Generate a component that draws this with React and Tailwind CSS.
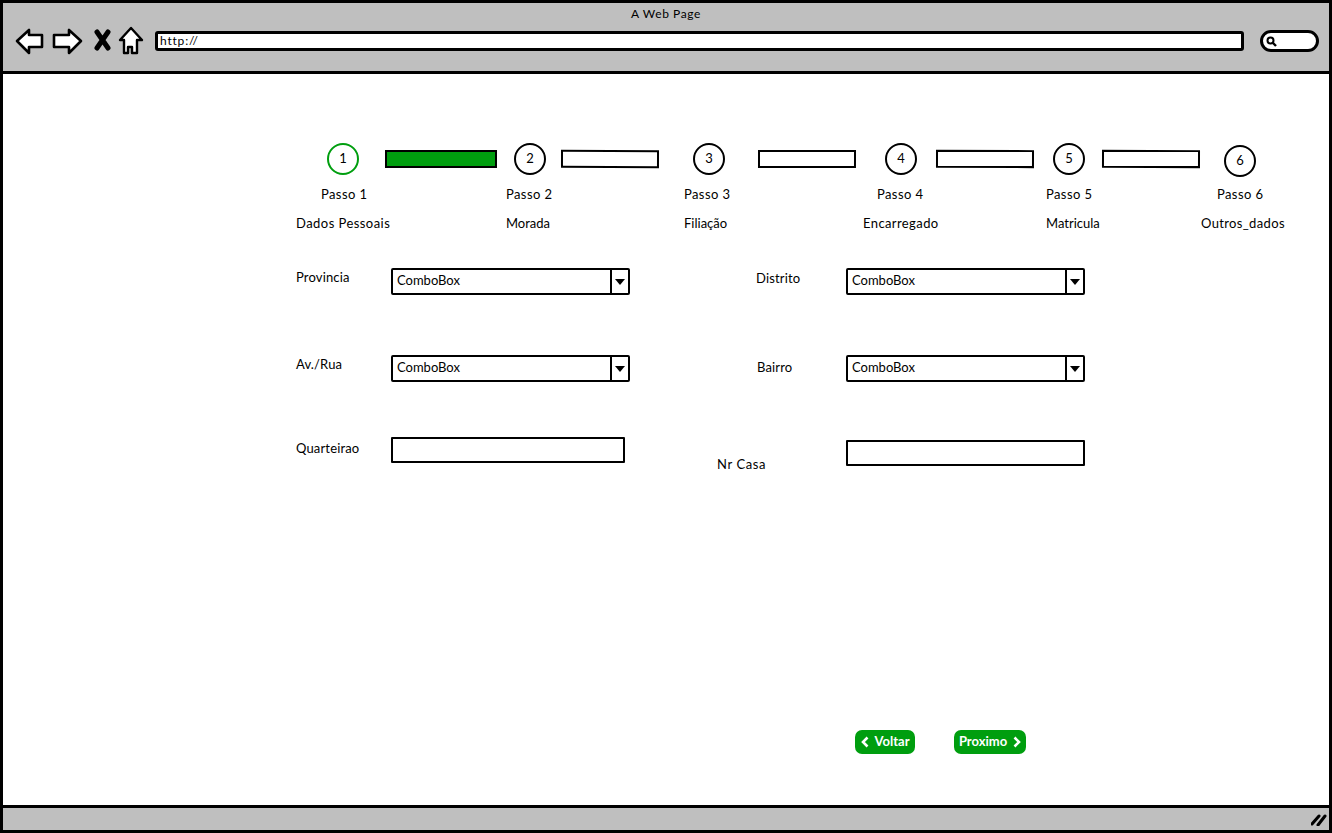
import React from "react";

const font = { fontFamily: '"Lato", "Open Sans", sans-serif' };

const steps = [
  { n: 1, bar: "ml-[31px] border-[#009e0f]", after: "ml-[26px] w-[112px] bg-[#009e0f] rotate-[0.1deg]" },
  { n: 2, bar: "ml-[17px] border-black", after: "ml-[15px] w-[98px] bg-white rotate-[0.2deg]" },
  { n: 3, bar: "ml-[34px] border-black", after: "ml-[33px] w-[98px] bg-white rotate-[0.1deg]" },
  { n: 4, bar: "ml-[29px] border-black", after: "ml-[19px] w-[98px] bg-white rotate-[0.15deg]" },
  { n: 5, bar: "ml-[19px] border-black", after: "ml-[17px] w-[98px] bg-white rotate-[0.15deg]" },
  { n: 6, bar: "ml-[24px] mt-[2px] border-black", after: "" },
];

const passos = [
  { text: "Passo 1", cls: "w-[210px] pl-[25px]" },
  { text: "Passo 2", cls: "w-[178px]" },
  { text: "Passo 3", cls: "w-[179px]" },
  { text: "Passo 4", cls: "w-[183px] pl-[14px]" },
  { text: "Passo 5", cls: "w-[155px]" },
  { text: "Passo 6", cls: "w-[90px] pl-[16px]" },
];

const nomes = [
  { text: "Dados Pessoais", cls: "w-[210px] tracking-[0.45px]" },
  { text: "Morada", cls: "w-[178px]" },
  { text: "Filiação", cls: "w-[179px]" },
  { text: "Encarregado", cls: "w-[183px] tracking-[0.4px]" },
  { text: "Matricula", cls: "w-[155px]" },
  { text: "Outros_dados", cls: "w-[90px] tracking-[0.35px]" },
];

const ComboBox = () => (
  <div className="flex h-[27px] w-[239px] items-center rounded-[2px] border-2 border-black bg-white pl-[4px]">
    <span className="mb-[1px] flex-1 text-[13px] tracking-normal text-black">ComboBox</span>
    <span className="flex h-full w-[18px] items-center justify-center border-l-2 border-black">
      <svg width="10" height="6" viewBox="0 0 10 6">
        <path d="M0 0 L10 0 L5 6 Z" fill="#000" />
      </svg>
    </span>
  </div>
);

const TextBox = ({ width }) => (
  <div className={`h-[26px] rounded-[1px] border-2 border-black bg-white ${width}`} />
);

const BrowserBar = () => (
  <div className="flex h-[71px] shrink-0 flex-col border-b-[3px] border-black bg-[#bfbfbf]">
    <div className="pt-[2px] text-center text-[12px] leading-[18px] tracking-[0.6px] text-black">A Web Page</div>
    <div className="mt-[3px] flex items-center pl-[12px] pr-[10px]">
      <svg width="130" height="30" viewBox="0 0 130 30" className="shrink-0">
        <path d="M2 15 L14 4 L14 9 L27 9 L27 21 L14 21 L14 27 Z" fill="#fff" stroke="#000" strokeWidth="2.6" strokeLinejoin="round" />
        <path d="M66 15 L54 4 L54 9 L39 9 L39 21 L54 21 L54 27 Z" fill="#fff" stroke="#000" strokeWidth="2.6" strokeLinejoin="round" />
        <path d="M82 6 L93 22 M93 6 L82 22" fill="none" stroke="#000" strokeWidth="5" strokeLinecap="round" />
        <path d="M116 2 L127 14 L122 14 L122 27 L117 27 L117 21 L113 21 L113 27 L109 27 L109 14 L105 14 Z" fill="#fff" stroke="#000" strokeWidth="2.4" strokeLinejoin="round" />
      </svg>
      <div className="ml-[10px] flex h-[20px] w-[1089px] items-center rounded-[3px] border-[3px] border-black bg-white pl-[2px] text-[12px] tracking-[0.8px] text-black">
        http://
      </div>
      <div className="ml-[16px] flex h-[22px] w-[59px] items-center rounded-[11px] border-[3px] border-black bg-white pl-[3px]">
        <svg width="11" height="11" viewBox="0 0 11 11">
          <circle cx="4.5" cy="4.5" r="3" fill="none" stroke="#000" strokeWidth="2" />
          <path d="M7 7 L10 10" stroke="#000" strokeWidth="2.4" />
        </svg>
      </div>
    </div>
  </div>
);

const Stepper = () => (
  <div className="mt-[69px] pl-[293px]">
    <div className="flex items-start">
      {steps.map((s) => (
        <React.Fragment key={s.n}>
          <div
            className={`flex h-[32px] w-[32px] shrink-0 items-center justify-center rounded-full border-2 bg-white text-[13px] text-black ${s.bar}`}
          >
            {s.n}
          </div>
          {s.after && (
            <div className={`mt-[7px] h-[18px] shrink-0 border-2 border-black ${s.after}`} />
          )}
        </React.Fragment>
      ))}
    </div>
    <div className="mt-[9px] flex h-[18px] items-center text-[13px] tracking-[0.4px] text-black">
      {passos.map((p) => (
        <div key={p.text} className={`shrink-0 ${p.cls}`}>{p.text}</div>
      ))}
    </div>
    <div className="mt-[11px] flex h-[18px] items-center text-[13px] text-black">
      {nomes.map((p) => (
        <div key={p.text} className={`shrink-0 whitespace-nowrap ${p.cls}`}>{p.text}</div>
      ))}
    </div>
  </div>
);

const Form = () => (
  <div className="mt-[35px] pl-[293px] text-[13px] tracking-[0.15px] text-black">
    <div className="flex h-[27px] items-start">
      <span className="w-[95px] leading-[18px]">Provincia</span>
      <ComboBox />
      <span className="ml-[126px] mt-[1px] w-[90px] leading-[18px]">Distrito</span>
      <ComboBox />
    </div>
    <div className="mt-[60px] flex h-[27px] items-start">
      <span className="w-[95px] leading-[18px]">Av./Rua</span>
      <ComboBox />
      <span className="ml-[127px] mt-[3px] w-[89px] leading-[18px]">Bairro</span>
      <ComboBox />
    </div>
    <div className="mt-[55px] flex items-start">
      <span className="w-[95px] pt-[2px] leading-[18px]">Quarteirao</span>
      <TextBox width="w-[234px]" />
      <span className="ml-[92px] w-[129px] pt-[18px] leading-[18px] tracking-[0.6px]">Nr Casa</span>
      <div className="mt-[3px]">
        <TextBox width="w-[239px]" />
      </div>
    </div>
  </div>
);

const Buttons = () => (
  <div className="mb-[51px] mt-auto flex gap-[39px] pl-[852px] text-[13px] font-bold text-white">
    <button className="flex h-[24px] w-[60px] items-center justify-center gap-[6px] rounded-[7px] bg-[#009e0f]">
      <svg width="8" height="12" viewBox="0 0 8 12">
        <path d="M6.5 1.5 L2 6 L6.5 10.5" fill="none" stroke="#fff" strokeWidth="2.6" />
      </svg>
      Voltar
    </button>
    <button className="flex h-[24px] w-[72px] items-center justify-center gap-[6px] rounded-[7px] bg-[#009e0f]">
      Proximo
      <svg width="8" height="12" viewBox="0 0 8 12">
        <path d="M1.5 1.5 L6 6 L1.5 10.5" fill="none" stroke="#fff" strokeWidth="2.6" />
      </svg>
    </button>
  </div>
);

const App = () => {
  return (
    <div style={font} className="flex h-[833px] w-[1332px] flex-col overflow-hidden border-[3px] border-black bg-white">
      <BrowserBar />
      <div className="flex flex-1 flex-col">
        <Stepper />
        <Form />
        <Buttons />
      </div>
      <div className="flex h-[25px] shrink-0 items-center justify-end border-t-[3px] border-black bg-[#bfbfbf] pr-[2px]">
        <svg width="16" height="14" viewBox="0 0 16 14">
          <path d="M1 12 L8 4 M7 13 L14 4" stroke="#000" strokeWidth="3" strokeLinecap="round" />
        </svg>
      </div>
    </div>
  );
};

export default App;
